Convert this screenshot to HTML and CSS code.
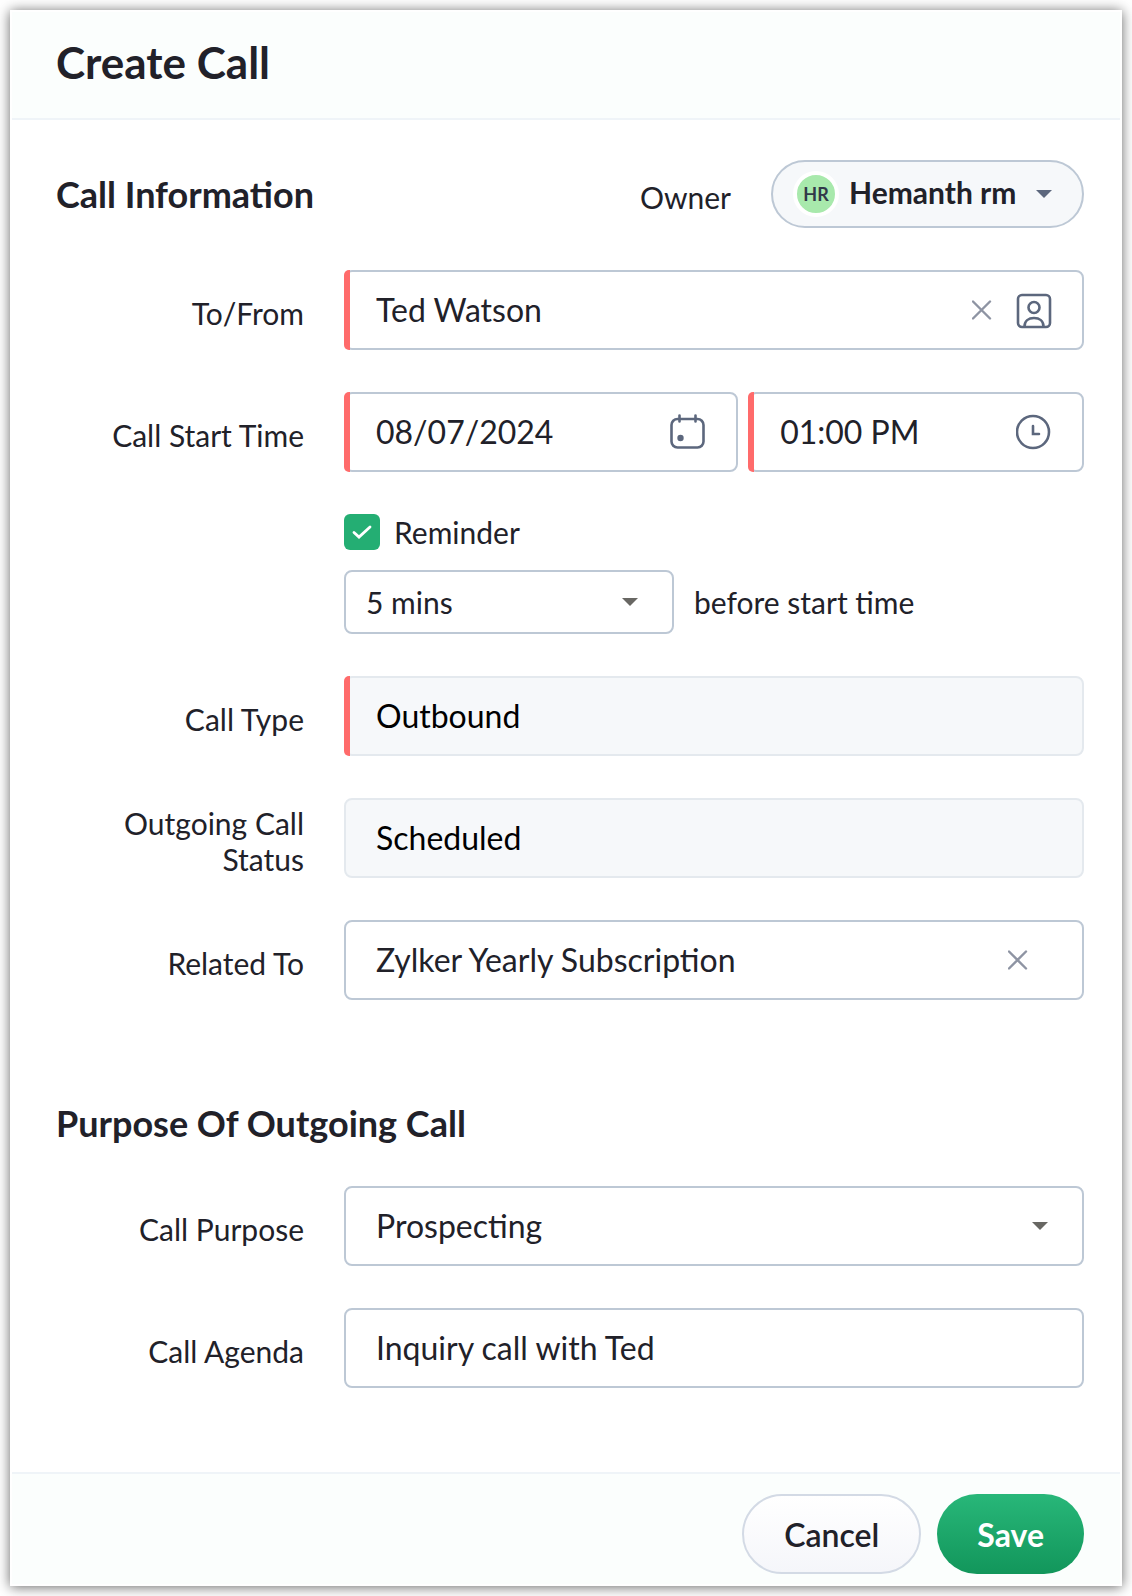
FILE: index.html
```html
<!DOCTYPE html>
<html lang="en">
<head>
  <meta charset="UTF-8" />
  <meta name="viewport" content="width=device-width, initial-scale=1.0"/>
  <title>Create Call</title>
  <link rel="stylesheet" href="styles.css">
</head>
<body>
<form class="dialog">
  <header class="dialog-head">
    <h1>Create Call</h1>
  </header>

  <div class="dialog-body">
    <section class="group">
      <div class="group-head">
        <h2>Call Information</h2>
        <label class="label" for="owner">Owner</label>
        <div class="owner">
          <span class="avatar">HR</span>
          <select id="owner" class="owner-select">
            <option>Hemanth rm</option>
          </select>
        </div>
      </div>

      <div class="row">
        <label class="label" for="contact">To/From</label>
        <div class="field required">
          <input id="contact" type="text" value="Ted Watson">
          <button type="button" class="icon-btn" aria-label="Clear contact">
            <svg width="20" height="20" viewBox="0 0 20 20"><path class="cross" d="M1 1.500l17 17M18 1.500l-17 17"/></svg>
          </button>
          <button type="button" class="icon-btn" aria-label="Choose contact">
            <svg width="36" height="40" viewBox="0 0 36 40"><rect x="2" y="5" width="32" height="32" rx="4"/><circle cx="18" cy="17.500" r="5.500"/><path d="M8.500 36.500c0-5.500 4-8.500 9.500-8.500s9.500 3 9.500 8.500"/></svg>
          </button>
        </div>
      </div>

      <div class="row">
        <label class="label" for="date">Call Start Time</label>
        <div class="start-time">
          <div class="field required">
            <input id="date" type="text" value="08/07/2024">
            <button type="button" class="icon-btn" aria-label="Pick date">
              <svg width="36" height="36" viewBox="0 0 36 36"><rect x="1.500" y="5" width="32" height="28.500" rx="6"/><path d="M9.500 1.500v6M25.500 1.500v6"/><circle class="dot" cx="10.500" cy="24" r="3.200"/></svg>
            </button>
          </div>
          <div class="field required">
            <input id="time" type="text" value="01:00 PM" aria-label="Time">
            <button type="button" class="icon-btn" aria-label="Pick time">
              <svg width="36" height="36" viewBox="0 0 36 36"><circle cx="17" cy="18" r="16"/><path d="M17 12v8h6"/></svg>
            </button>
          </div>
        </div>
      </div>

      <div class="row">
        <div class="reminder">
          <div class="check">
            <input id="reminder" type="checkbox" checked>
            <label for="reminder">Reminder</label>
          </div>
          <div class="before">
            <select id="before" class="small-select">
              <option>5 mins</option>
            </select>
            <label for="before">before start time</label>
          </div>
        </div>
      </div>

      <div class="row">
        <label class="label" for="type">Call Type</label>
        <div class="field required locked">
          <input id="type" type="text" value="Outbound" readonly>
        </div>
      </div>

      <div class="row">
        <label class="label" for="status">Outgoing Call Status</label>
        <div class="field locked">
          <input id="status" type="text" value="Scheduled" readonly>
        </div>
      </div>

      <div class="row">
        <label class="label" for="related">Related To</label>
        <div class="field related">
          <input id="related" type="text" value="Zylker Yearly Subscription">
          <button type="button" class="icon-btn" aria-label="Clear related record">
            <svg width="20" height="20" viewBox="0 0 20 20"><path class="cross" d="M1 1.500l17 17M18 1.500l-17 17"/></svg>
          </button>
        </div>
      </div>
    </section>

    <section class="group">
      <h2>Purpose Of Outgoing Call</h2>

      <div class="row">
        <label class="label" for="purpose">Call Purpose</label>
        <div class="field">
          <select id="purpose">
            <option>Prospecting</option>
          </select>
        </div>
      </div>

      <div class="row">
        <label class="label" for="agenda">Call Agenda</label>
        <div class="field">
          <input id="agenda" type="text" value="Inquiry call with Ted">
        </div>
      </div>
    </section>
  </div>

  <footer class="dialog-foot">
    <button type="button" class="btn">Cancel</button>
    <button type="submit" class="btn save">Save</button>
  </footer>
</form>
</body>
</html>
```
FILE: styles.css
```css
* {
  box-sizing: border-box;
}
body {
  margin: 0;
  padding: 10px;
  background: #fff;
  color: #212129;
  font: 30px/36px Lato, sans-serif;
}
h1, h2 {
  margin: 0;
  font-weight: 700;
}
h1 {
  font-size: 44px;
  line-height: 52px;
}
h2 {
  font-size: 36px;
  line-height: 42px;
}
input, select, button {
  margin: 0;
  color: inherit;
  font-family: inherit;
}

/* dialog */
.dialog {
  border: 2px solid #fff;
  background: #fff;
  box-shadow: 0 1px 12px rgba(0, 0, 0, 0.6);
}
.dialog-head {
  padding: 24px 44px 30px;
  border-bottom: 2px solid #eff4f8;
  background: #fbfefd;
}
.dialog-body {
  display: grid;
  gap: 102px;
  padding: 40px 36px 84px 44px;
}
.dialog-foot {
  display: flex;
  justify-content: flex-end;
  gap: 16px;
  padding: 20px 36px 10px;
  border-top: 2px solid #eff4f8;
  background: #fbfefd;
}

/* groups and rows */
.group {
  display: grid;
  grid-template-columns: minmax(0, 1fr);
  gap: 42px;
}
.group-head {
  display: flex;
  align-items: center;
}
.group-head h2 {
  flex: 1;
}
.row {
  display: grid;
  grid-template-columns: 248px minmax(0, 1fr);
  column-gap: 40px;
  align-items: center;
}
.label {
  padding-top: 5px;
  text-align: right;
}

/* owner picker */
.owner {
  display: flex;
  align-items: center;
  gap: 10px;
  height: 68px;
  margin-left: 40px;
  padding: 0 30px 0 20px;
  border: 2px solid #bdc8d5;
  border-radius: 34px;
  background: #f6f8fa;
}
.avatar {
  width: 46px;
  height: 46px;
  border: 4px solid #fff;
  border-radius: 50%;
  background: #a8e9ac;
  color: #313949;
  font-size: 18px;
  font-weight: 700;
  line-height: 38px;
  text-align: center;
}

select {
  appearance: none;
  border: 0;
  background: url("data:image/svg+xml,%3Csvg xmlns='http://www.w3.org/2000/svg' width='16' height='8'%3E%3Cpath d='M0 0h16L8 8z' fill='%23686763'/%3E%3C/svg%3E") no-repeat right 34px center;
}
.owner-select {
  height: 60px;
  padding: 0 35px 4px 0;
  background-image: url("data:image/svg+xml,%3Csvg xmlns='http://www.w3.org/2000/svg' width='16' height='8'%3E%3Cpath d='M0 0h16L8 8z' fill='%235c677d'/%3E%3C/svg%3E");
  background-position: right center;
  font-size: 30px;
  font-weight: 700;
}

/* fields */
.field {
  position: relative;
  display: flex;
  align-items: center;
  gap: 24px;
  height: 80px;
  border: 2px solid #bdc8d5;
  border-radius: 8px;
}
.field input, .field select {
  flex: 1;
  min-width: 0;
  height: 76px;
  padding: 0 0 1px 30px;
  border: 0;
  border-radius: 6px;
  background-color: transparent;
  font-size: 32px;
}
.required::before {
  content: "";
  position: absolute;
  inset: -2px auto -2px -2px;
  width: 6px;
  border-radius: 5px 0 0 5px;
  background: #ff6b6b;
}
.locked {
  border-color: #e4e9ee;
  background: #f6f8fa;
  color: #000;
}
.start-time {
  display: grid;
  grid-template-columns: minmax(0, 54fr) minmax(0, 46fr);
  gap: 10px;
}

.icon-btn {
  display: flex;
  padding: 0;
  border: 0;
  background: none;
}
.icon-btn:last-child {
  margin-right: 30px;
}
.related .icon-btn {
  margin-right: 54px;
}
.icon-btn svg {
  fill: none;
  stroke: #5c677d;
  stroke-width: 2.6;
  stroke-linecap: round;
}
.icon-btn .cross {
  stroke: #8e94a3;
  stroke-width: 2.4;
}
.icon-btn .dot {
  fill: #5c677d;
  stroke: none;
}

/* reminder */
.reminder {
  grid-column: 2;
  display: grid;
  gap: 20px;
}
.check {
  display: flex;
  align-items: center;
  gap: 14px;
}
.check input {
  appearance: none;
  width: 36px;
  height: 36px;
  border-radius: 6px;
  background: #24ae73 url("data:image/svg+xml,%3Csvg xmlns='http://www.w3.org/2000/svg' width='20' height='14'%3E%3Cpath d='M2 7.500l5 4.500L18 2' fill='none' stroke='%23fff' stroke-width='2.800' stroke-linecap='round'/%3E%3C/svg%3E") no-repeat center;
}
.before {
  display: flex;
  align-items: center;
  gap: 20px;
}
.small-select {
  width: 330px;
  height: 64px;
  padding: 0 0 0 20px;
  border: 2px solid #bdc8d5;
  border-radius: 8px;
  font-size: 30px;
}

/* buttons */
.btn {
  height: 80px;
  padding: 0 40px;
  border: 2px solid #d3dae5;
  border-radius: 40px;
  background: linear-gradient(#fff, #f5f6fa);
  font-size: 32px;
  font-weight: 600;
}
.save {
  border: 0;
  background: linear-gradient(#28b779, #12965b);
  color: #fff;
  font-weight: 700;
}
```
